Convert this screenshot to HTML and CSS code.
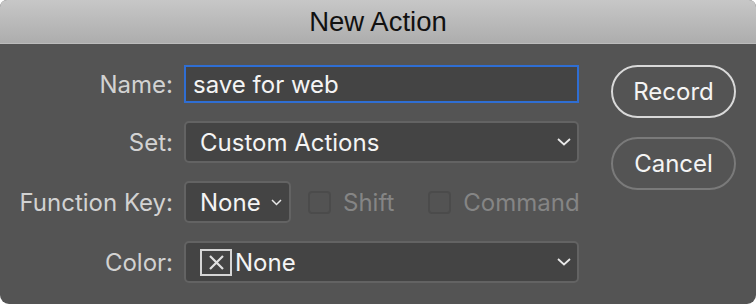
FILE: index.html
```html
<!DOCTYPE html>
<html lang="en">
<head>
    <meta charset="UTF-8">
    <meta name="viewport" content="width=device-width, initial-scale=1.0">
    <title>New Action</title>
    <link rel="stylesheet" href="styles.css">
</head>
<body>
    <div class="dialog">
        <div class="titlebar">New Action</div>

        <div class="content">
            <div class="form">
                <label class="label" for="name">Name:</label>
                <div class="field name-field" id="name">save for web</div>

                <label class="label">Set:</label>
                <div class="field select">
                    <span>Custom Actions</span>
                    <svg class="chevron" width="14" height="8" viewBox="0 0 14 8"><path d="M1 1l6 5.5L13 1" fill="none" stroke="#e8e8e8" stroke-width="1.8"/></svg>
                </div>

                <label class="label">Function Key:</label>
                <div class="key-row">
                    <div class="field select small">
                        <span>None</span>
                        <svg class="chevron" width="11" height="7" viewBox="0 0 11 7"><path d="M1 1l4.5 4.5L10 1" fill="none" stroke="#e8e8e8" stroke-width="1.5"/></svg>
                    </div>
                    <div class="check">
                        <span class="box"></span>
                        <span>Shift</span>
                    </div>
                    <div class="check">
                        <span class="box"></span>
                        <span>Command</span>
                    </div>
                </div>

                <label class="label">Color:</label>
                <div class="field select">
                    <span class="color-value">
                        <span class="swatch">
                            <svg width="17" height="17" viewBox="0 0 17 17"><path d="M2 2l13 13M15 2L2 15" stroke="#e0e0e0" stroke-width="2.2"/></svg>
                        </span>None
                    </span>
                    <svg class="chevron" width="14" height="8" viewBox="0 0 14 8"><path d="M1 1l6 5.5L13 1" fill="none" stroke="#e8e8e8" stroke-width="1.8"/></svg>
                </div>
            </div>

            <div class="buttons">
                <button class="btn primary">Record</button>
                <button class="btn">Cancel</button>
            </div>
        </div>
    </div>
</body>
</html>
```

FILE: styles.css
```css
html {
    background-color: white;
}
body {
    margin: 0;
    font-family: Inter, "Noto Sans", sans-serif;
}
.dialog {
    width: 756px;
    height: 304px;
    background-color: #545454;
    border-radius: 7px 7px 9px 9px;
    overflow: hidden;
}
.titlebar {
    height: 43px;
    line-height: 43px;
    text-align: center;
    font-family: "Liberation Sans", Arial, sans-serif;
    font-size: 27.5px;
    color: #111;
    background: linear-gradient(#c7c7c7, #adadad);
    border-bottom: 1px solid #bcbcbc;
}
.content {
    display: flex;
    padding: 21px 0 0 0;
}
.form {
    display: grid;
    grid-template-columns: 173px 395px;
    grid-template-rows: 38px 42px 42px 42px;
    column-gap: 11px;
    row-gap: 18px;
    align-items: center;
}
.label {
    text-align: right;
    font-size: 24px;
    color: #d2d2d2;
}
.field {
    box-sizing: border-box;
    height: 100%;
    display: flex;
    align-items: center;
    font-size: 24px;
    color: #f4f4f4;
    background-color: #444;
}
.name-field {
    border: 2px solid #2f6ed3;
    padding-left: 7px;
}
.select {
    border: 2px solid #636363;
    border-radius: 5px;
    padding: 0 6px 0 14px;
    justify-content: space-between;
}
.chevron {
    display: block;
}
.key-row {
    display: flex;
    align-items: center;
    height: 100%;
}
.select.small {
    flex-shrink: 0;
    width: 107px;
    padding: 0 7px 0 14px;
}
.check {
    display: flex;
    align-items: center;
    gap: 12px;
    margin-left: 17px;
    font-size: 24px;
    color: #858585;
}
.check + .check {
    margin-left: 34px;
}
.box {
    box-sizing: border-box;
    width: 23px;
    height: 23px;
    border: 2px solid #4b4b4b;
    border-radius: 4px;
    background-color: #535353;
}
.color-value {
    display: flex;
    align-items: center;
}
.swatch {
    box-sizing: border-box;
    width: 32px;
    height: 27px;
    border: 2px solid #d6d6d6;
    display: flex;
    align-items: center;
    justify-content: center;
    margin-right: 3px;
}
.swatch svg {
    display: block;
}
.buttons {
    display: flex;
    flex-direction: column;
    gap: 19px;
    margin-left: 32px;
}
.btn {
    width: 125px;
    height: 53px;
    border: 2px solid #7a7a7a;
    border-radius: 27px;
    background: transparent;
    color: #f4f4f4;
    font-family: Inter, "Noto Sans", sans-serif;
    font-size: 24px;
    padding: 0;
}
.btn.primary {
    border-color: #d9d9d9;
}
```
